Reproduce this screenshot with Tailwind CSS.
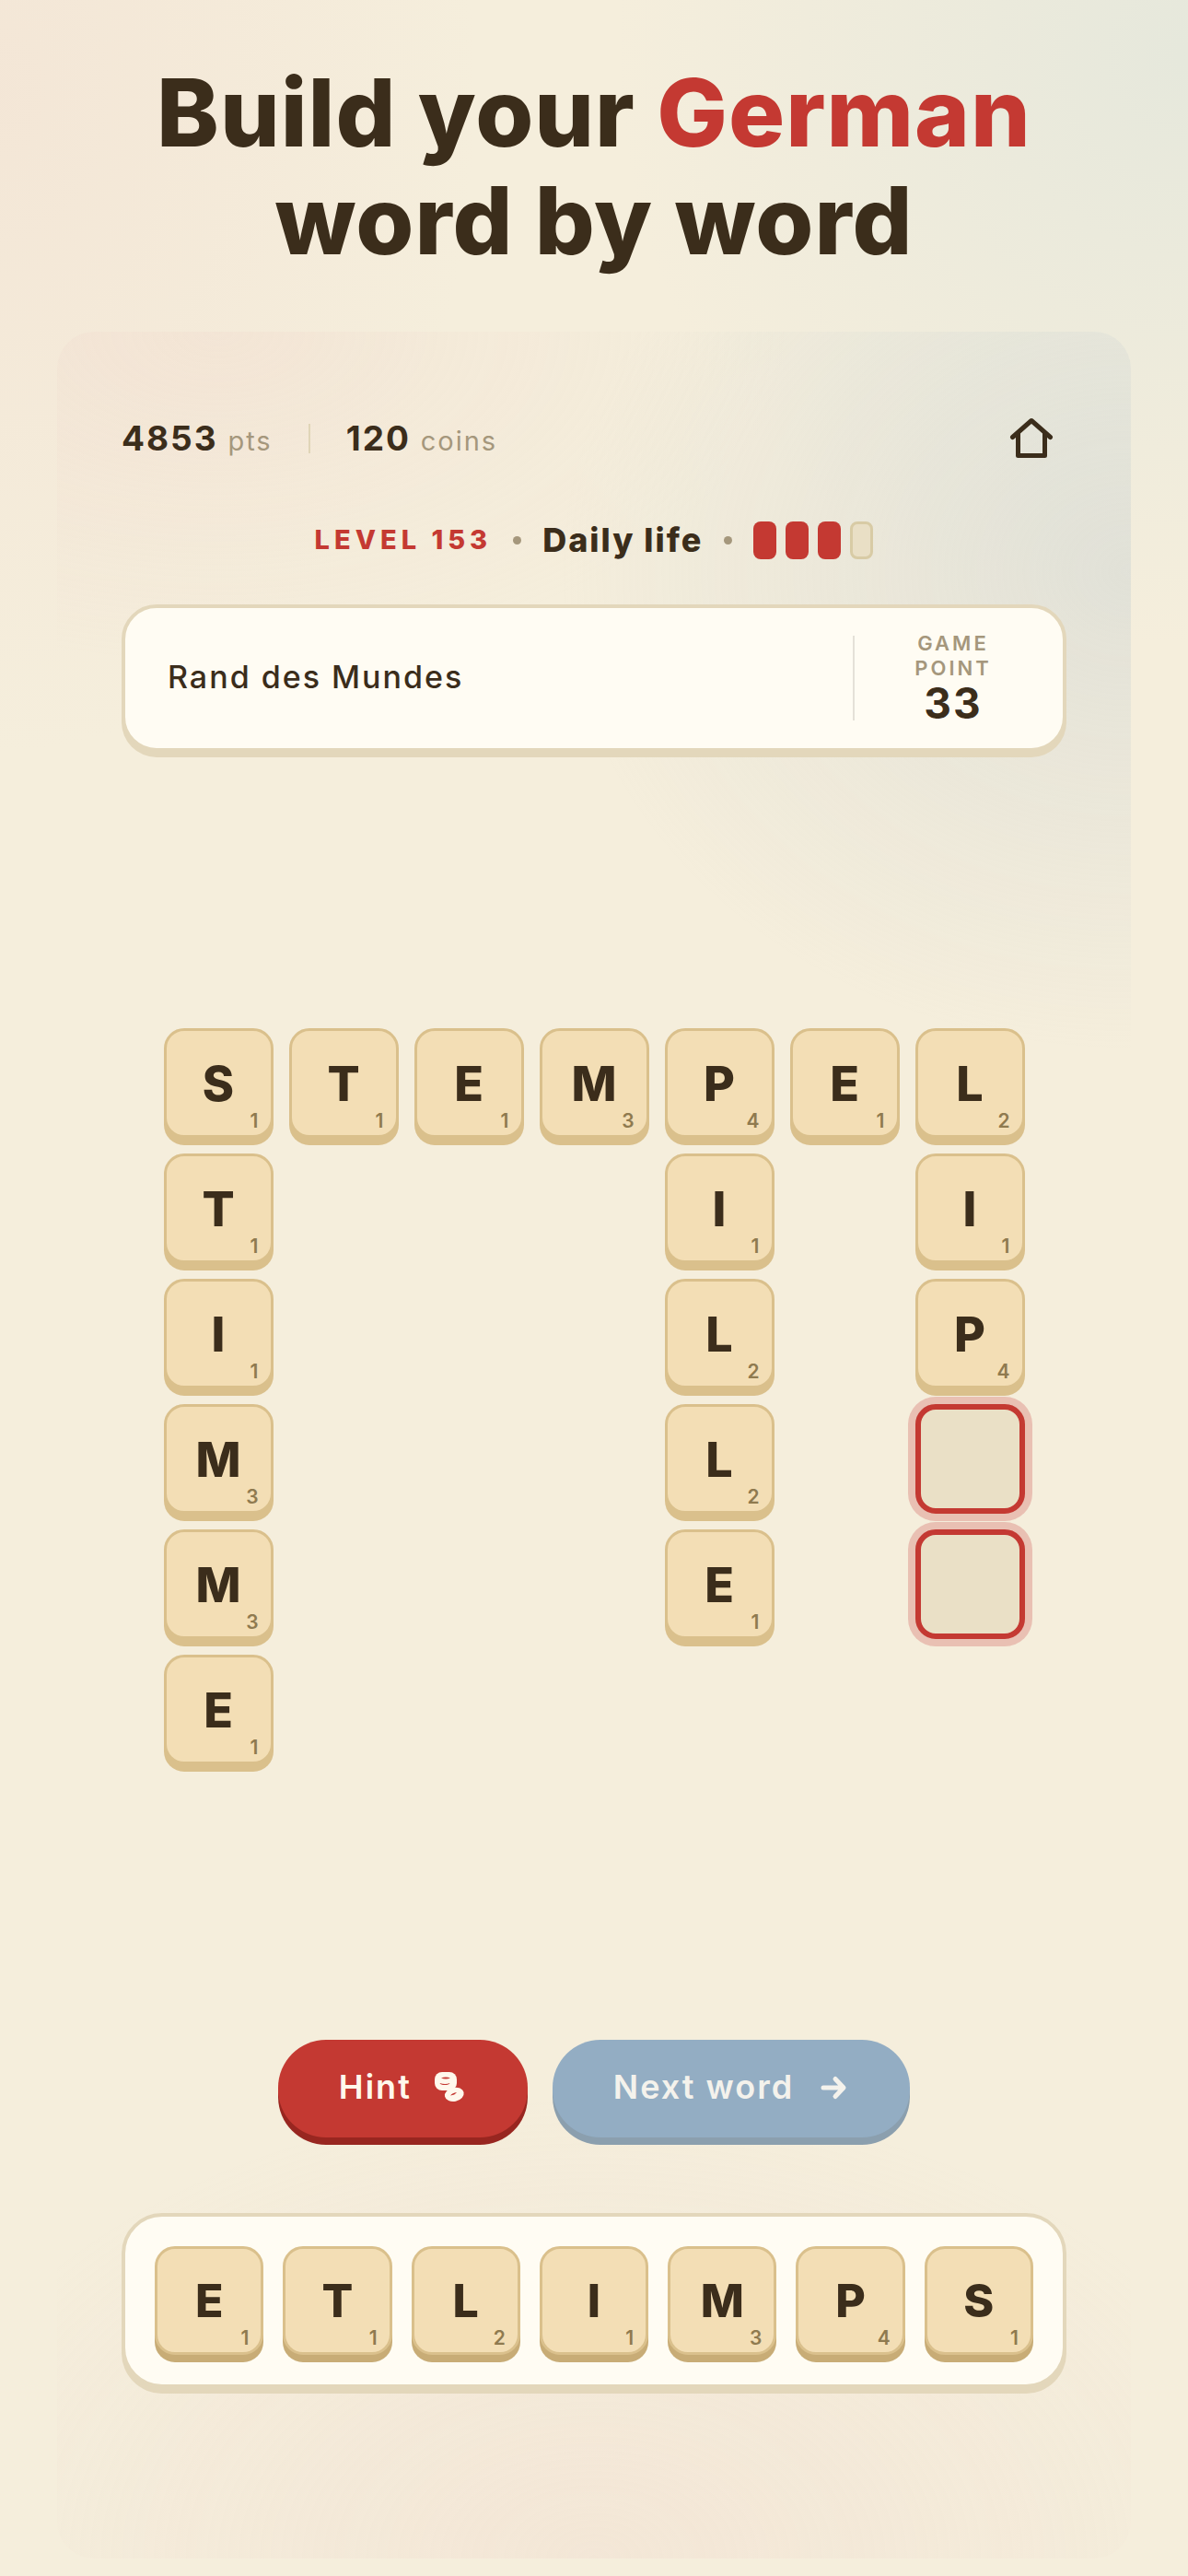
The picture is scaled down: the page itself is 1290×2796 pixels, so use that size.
<!DOCTYPE html>
<html lang="en">
<head>
    <meta charset="UTF-8">
    <meta name="viewport" content="width=device-width, initial-scale=1.0">
    <title>Build your German word by word</title>
    <script src="https://cdn.jsdelivr.net/npm/@tailwindcss/browser@4"></script>
    <style>
        body {
            font-family: 'Inter', 'Liberation Sans', sans-serif;
            background:
                radial-gradient(ellipse 520px 720px at 0 100px, rgba(240, 210, 200, 0.28), transparent),
                radial-gradient(ellipse 620px 640px at 100% 60px, rgba(205, 222, 220, 0.38), transparent),
                #f5eedc;
        }
        .panel {
            background:
                radial-gradient(ellipse 620px 360px at 15% 0, rgba(240, 210, 200, 0.22), transparent),
                radial-gradient(ellipse 620px 520px at 100% 260px, rgba(190, 202, 208, 0.34), transparent),
                radial-gradient(ellipse 760px 500px at 50% 100%, rgba(240, 210, 200, 0.26), transparent);
        }
    </style>
</head>
<body class="min-h-screen text-[#3b2d1b]">
    <main class="flex min-h-screen flex-col px-[62px] pt-[64px] pb-[19px]">
        <h1 class="text-center text-[102px] leading-[117px] font-extrabold tracking-[1px]">
            Build your <span class="text-[#c43932]">German</span><br>word by word
        </h1>

        <div class="panel mt-[62px] flex grow flex-col rounded-[40px] px-[70px]">
            <header class="mt-[84px] flex h-[64px] items-center justify-between">
                <div class="flex items-center gap-[39px]">
                    <p class="text-[37px] font-bold tracking-[2px]">4853 <span class="text-[29px] font-normal text-[#a5977c]">pts</span></p>
                    <span class="h-[32px] w-[2px] bg-[#e0d5b7]"></span>
                    <p class="text-[37px] font-bold tracking-[2px]">120 <span class="text-[29px] font-normal text-[#a5977c]">coins</span></p>
                </div>
                <button type="button" aria-label="Home" class="p-[14px]">
                    <svg class="size-[48px]" viewBox="0 0 48 48" fill="none" stroke="currentColor" stroke-width="5" stroke-linecap="round" stroke-linejoin="round"><path d="M3.5 22.500 24 4.500l20.500 18M9.500 18v24.500h29V18"/></svg>
                </button>
            </header>

            <div class="mt-[56px] flex h-[44px] items-center justify-center gap-[23px]">
                <p class="text-[29px] font-extrabold tracking-[5px] text-[#c43932]">LEVEL 153</p>
                <span class="size-[9px] rounded-full bg-[#a5977c]"></span>
                <p class="text-[36px] font-extrabold tracking-[2px]">Daily life</p>
                <span class="size-[9px] rounded-full bg-[#a5977c]"></span>
                <div class="flex gap-[10px]">
                    <span class="h-[41px] w-[25px] rounded-[8px] bg-[#c43932]"></span>
                    <span class="h-[41px] w-[25px] rounded-[8px] bg-[#c43932]"></span>
                    <span class="h-[41px] w-[25px] rounded-[8px] bg-[#c43932]"></span>
                    <span class="h-[41px] w-[25px] rounded-[8px] border-[3px] border-[#d8cba5] bg-[#e9dfc5]"></span>
                </div>
            </div>

            <section class="mt-[48px] flex h-[160px] items-center rounded-[38px] border-4 border-[#e3d7bb] bg-[#fffcf3] pl-[46px] shadow-[0_6px_0_#e3d7bb]">
                <p class="grow pb-[4px] text-[34px] font-medium tracking-[2px]">Rand des Mundes</p>
                <div class="flex h-[92px] w-[228px] flex-col items-center justify-center border-l-2 border-[#e5e1d8] pr-[12px]">
                    <p class="w-[110px] text-center text-[22px] leading-[27px] font-semibold tracking-[3px] text-[#a5977c]">GAME POINT</p>
                    <p class="text-[46px] leading-[48px] font-bold tracking-[2px]">33</p>
                </div>
            </section>

            <div id="board" class="mt-[300px] grid grid-cols-[repeat(7,119px)] auto-rows-[119px] justify-center gap-[17px]"></div>

            <div class="mt-[299px] flex justify-center gap-[27px]">
                <button type="button" class="flex h-[106px] items-center rounded-[52px] bg-[#c43932] px-[66px] pb-[4px] text-[36px] font-semibold tracking-[2px] text-[#fff8ec] shadow-[0_8px_0_#982620]">
                    Hint
                    <svg class="ml-[24px] size-[36px]" viewBox="13 10 36 36">
                        <rect x="14" y="12" width="24" height="20" rx="8" fill="currentColor"/>
                        <ellipse cx="35.300" cy="36.300" rx="10.500" ry="7.500" transform="rotate(-12 35.300 36.300)" fill="currentColor"/>
                        <path d="M21 18.500q5-2 10 0q-5 2-10 0zM19.500 24q6 2 11 0q-1 2-5.500 2t-5.500-2zM31 37.500q2-3 7-3.500q-2 3-7 3.500z" fill="#c43932"/>
                    </svg>
                </button>
                <button type="button" class="flex h-[106px] items-center rounded-[52px] bg-[#93adc3] px-[66px] pb-[4px] text-[36px] font-semibold tracking-[2px] text-[#f4f2ec] shadow-[0_8px_0_#8b9fae]">
                    Next word
                    <svg class="ml-[28px] size-[32px]" viewBox="0 0 32 32" fill="none" stroke="currentColor" stroke-width="5" stroke-linecap="round" stroke-linejoin="round"><path d="M4 17h21M17 7.500l9 9.500-9 9.500"/></svg>
                </button>
            </div>

            <div id="rack" class="mt-[82px] grid grid-cols-7 gap-[21px] rounded-[44px] border-4 border-[#e3d7bb] bg-[#fffcf3] p-[32px] shadow-[0_6px_0_#e3d7bb]"></div>
        </div>
    </main>

    <script>
        const points = { S: 1, T: 1, E: 1, M: 3, P: 4, L: 2, I: 1 };

        // "_" is an open cell, "." is empty space
        const rows = [
            'STEMPEL',
            'T...I.I',
            'I...L.P',
            'M...L._',
            'M...E._',
            'E......',
        ];

        const board = document.getElementById('board');
        rows.forEach((row) => {
            [...row].forEach((letter) => {
                const cell = document.createElement('div');
                if (letter === '_') {
                    cell.className = 'rounded-[22px] border-[6px] border-[#c43932] bg-[#eae0c6] shadow-[0_0_0_8px_#e9c0b3]';
                } else if (letter !== '.') {
                    cell.className = 'relative flex items-center justify-center rounded-[22px] border-[3px] border-[#dac08c] bg-[#f3deb5] pt-[3px] text-[52px] font-extrabold shadow-[0_8px_0_#dac08c]';
                    cell.innerHTML = `${letter}<span class="absolute right-[13px] bottom-[3px] text-[21px] leading-[24px] font-semibold text-[#8f7a4f]">${points[letter]}</span>`;
                }
                board.appendChild(cell);
            });
        });

        const rack = document.getElementById('rack');
        [...'ETLIMPS'].forEach((letter) => {
            const tile = document.createElement('button');
            tile.type = 'button';
            tile.className = 'relative flex h-[118px] items-center justify-center rounded-[22px] border-[3px] border-[#dac08c] bg-[#f3deb5] text-[50px] font-extrabold shadow-[0_8px_0_#c8ac76]';
            tile.innerHTML = `${letter}<span class="absolute right-[13px] bottom-[3px] text-[21px] leading-[24px] font-semibold text-[#8f7a4f]">${points[letter]}</span>`;
            rack.appendChild(tile);
        });
    </script>
</body>
</html>
